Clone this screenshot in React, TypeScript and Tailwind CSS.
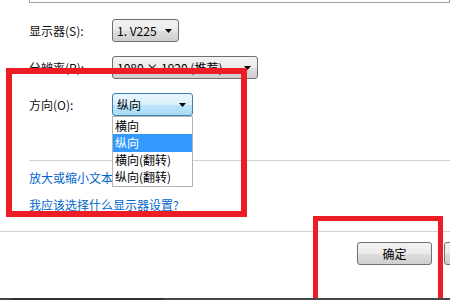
import React from "react";

const font = { fontFamily: '"Noto Sans CJK SC", "Noto Sans", sans-serif' };

function Arrow() {
  return (
    <svg width="7" height="4" viewBox="0 0 7 4" className="shrink-0">
      <path d="M0 0 H7 L3.5 4 Z" fill="#000" />
    </svg>
  );
}

function Combo({ w, text, focused }: { w: string; text: string; focused?: boolean }) {
  return (
    <div
      className={`${w} h-[23px] flex items-center justify-between pl-[4px] pr-[6px] rounded-[3px] border ${
        focused
          ? "border-[#3c7fb1] bg-[linear-gradient(#eaf6fd_0%,#d9f0fc_50%,#bee6fd_51%,#a7d9f5_100%)]"
          : "border-[#707070] bg-[linear-gradient(#f2f2f2_0%,#ebebeb_50%,#dddddd_51%,#cfcfcf_100%)]"
      }`}
    >
      <span className="text-[12px] leading-[16px] text-black whitespace-nowrap">{text}</span>
      <Arrow />
    </div>
  );
}

export default function App() {
  const items = ["横向", "纵向", "横向(翻转)", "纵向(翻转)"];
  return (
    <div className="relative w-[450px] h-[300px] bg-white overflow-hidden flex flex-col" style={font}>
      <div className="ml-[29px] h-[3px] border-l border-r border-b border-[#a0a0a0]" />
      <div className="pl-[29px] flex flex-col">
        <div className="mt-[16px] flex items-center h-[23px]">
          <span className="w-[83px] text-[12px] leading-[16px] text-[#111111]">显示器(S):</span>
          <Combo w="w-[67px]" text="1. V225" />
        </div>
        <div className="mt-[14px] flex items-center h-[23px]">
          <span className="w-[83px] text-[12px] leading-[16px] text-[#111111]">分辨率(R):</span>
          <Combo w="w-[146px]" text="1080 × 1920 (推荐)" />
        </div>
        <div className="mt-[14px] flex items-center h-[23px]">
          <span className="w-[83px] text-[12px] leading-[16px] text-[#111111]">方向(O):</span>
          <div className="relative">
            <Combo w="w-[81px]" text="纵向" focused />
            <div className="absolute left-0 top-[23px] w-[81px] h-[71px] z-10 bg-white border border-[#b4b4b4] flex flex-col">
              {items.map((t, i) => (
                <div
                  key={t}
                  className={`h-[17.5px] flex items-center pl-[2px] text-[12px] leading-[16px] whitespace-nowrap ${
                    i === 1 ? "bg-[#3399ff] text-white" : "text-black"
                  }`}
                >
                  {t}
                </div>
              ))}
            </div>
          </div>
        </div>
        <div className="mt-[44px] border-t border-[#d2d2d2]" />
        <div className="mt-[9px] w-[83px] overflow-hidden text-[12px] leading-[16px] text-[#0066cc] whitespace-nowrap">放大或缩小文本和其他项目</div>
        <div className="mt-[11px] text-[12px] leading-[16px] text-[#0066cc] whitespace-nowrap">我应该选择什么显示器设置?</div>
      </div>
      <div className="mt-[18px] border-t border-[#d2d2d2]" />
      <div className="mt-[10px] flex gap-[12px] pl-[357px]">
        <div className="w-[75px] h-[23px] shrink-0 flex items-center justify-center rounded-[3px] border border-[#707070] bg-[linear-gradient(#f2f2f2_0%,#ebebeb_50%,#dddddd_51%,#cfcfcf_100%)] text-[12px] leading-[16px] text-black">
          确定
        </div>
        <div className="w-[75px] h-[23px] shrink-0 rounded-[3px] border border-[#707070] bg-[linear-gradient(#f2f2f2_0%,#ebebeb_50%,#dddddd_51%,#cfcfcf_100%)]" />
      </div>
      <div className="mt-auto h-[2px] flex z-30">
        <div className="w-[12px] bg-[#444444]" />
        <div className="w-[152px] bg-[#333333]" />
        <div className="flex-1 bg-[#474747]" />
      </div>
      <div className="absolute left-[6px] top-[68px] w-[241px] h-[149px] border-[6px] border-[#ee1c24] z-20 pointer-events-none" />
      <div className="absolute left-[313px] top-[216px] w-[130px] h-[82px] border-[5px] border-b-0 border-[#ee1c24] z-20 pointer-events-none" />
    </div>
  );
}
